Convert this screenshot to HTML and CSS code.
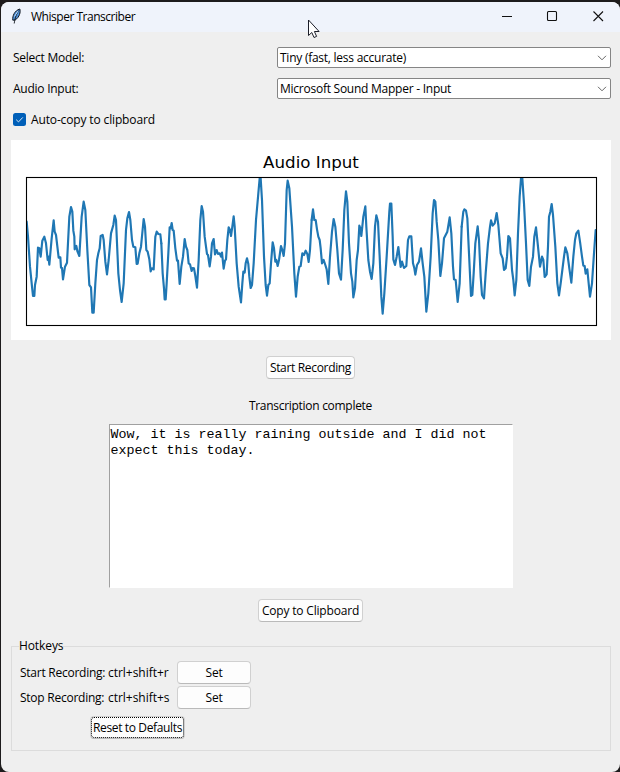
FILE: index.html
```html
<!DOCTYPE html>
<html lang="en">
<head>
<meta charset="utf-8">
<title>Whisper Transcriber</title>
<link rel="stylesheet" href="styles.css">
</head>
<body>
<main class="window">
  <header class="titlebar">
    <svg class="feather" width="12" height="17" viewBox="0 0 12 17">
      <path d="M1.8 12.200C1.200 8 3.600 2.600 8.800 1c1 3-.2 8-4.600 11z" fill="#4f91d8" stroke="#10151d" stroke-width="1"/>
      <path d="M8 2.500C5.800 5 4.200 9 3.200 15.500" fill="none" stroke="#10151d" stroke-width=".9"/>
      <path d="M7 3 3.500 8.500" stroke="#b9dcff" stroke-width="1"/>
    </svg>
    <h1 class="title">Whisper Transcriber</h1>
    <div class="controls">
      <svg width="46" height="30" viewBox="0 0 46 30"><path d="M18 14.500h10" stroke="#111"/></svg>
      <svg width="46" height="30" viewBox="0 0 46 30"><rect x="17.500" y="9.500" width="9" height="9" rx="1" fill="none" stroke="#111" stroke-width="1.100"/></svg>
      <svg width="46" height="30" viewBox="0 0 46 30"><path d="m17.500 9.500 9.500 9.500m0-9.500-9.500 9.500" stroke="#111" stroke-width="1.100"/></svg>
    </div>
  </header>
  <svg class="cursor" width="14" height="20" viewBox="0 0 14 20"><path d="M1.500 1v15.500l3.300-3 2.200 5 2.600-1.100-2.200-4.900h4.700z" fill="#fff" stroke="#1b1d28"/></svg>

  <section class="settings">
    <div class="row"><span>Select Model:</span>
      <div class="combo"><span>Tiny (fast, less accurate)</span><svg width="10" height="6" viewBox="0 0 10 6"><path d="m1 .8 4 4 4-4" fill="none" stroke="#666"/></svg></div></div>
    <div class="row"><span>Audio Input:</span>
      <div class="combo"><span>Microsoft Sound Mapper - Input</span><svg width="10" height="6" viewBox="0 0 10 6"><path d="m1 .8 4 4 4-4" fill="none" stroke="#666"/></svg></div></div>
    <div class="check"><svg width="13" height="13" viewBox="0 0 13 13"><rect width="13" height="13" rx="2.500" fill="#005fb8"/><path d="m3.200 6.700 2.300 2.200 4.300-4.500" fill="none" stroke="#d8e8f6"/></svg><span>Auto-copy to clipboard</span></div>
  </section>

  <section class="chart">
    <h2 class="chart-title">Audio Input</h2>
    <svg class="plot" width="600" height="165" viewBox="0 105 1800 495">
      <defs><clipPath id="axes"><rect x="46" y="112" width="1711" height="444"/></clipPath></defs>
      <g clip-path="url(#axes)" class="wave">
        <polyline transform="translate(-3 0)" points="50,245 54,290 60,380 66,440 69,468 73,468 75,435 80,410 84,323 88,325 92,350 97,302 103,290 108,310 113,360 115,350 118,374 125,295 131,241 134,275 138,285 146,353 151,352 153,383 156,384 159,418 165,380 171,368 178,230 183,201 187,215 190,272 193,290 194,328 199,318 202,333 208,348 215,230 221,185 226,210 232,330 238,435 243,442 247,518 251,518 256,430 261,360 265,340 269,325 272,288 278,285 281,300 286,365 291,403 296,360 303,280 310,255 314,227 318,240 325,400 330,450 335,486 341,430 348,270 352,235 357,216 361,240 366,300 370,320 376,322 380,372 383,371 388,340 393,320 401,237 405,260 409,330 413,335 418,358 422,394 426,385 431,388 436,290 440,275 445,282 451,283 454,310"/>
        <polyline transform="translate(447 0)" points="4,310 8,400 12,445 14,478 17,478 20,430 25,340 29,262 32,265 35,249 38,270 41,272 46,325 51,362 54,362 59,432 64,380 69,350 74,297 78,320 82,330 86,370 90,373 95,393 98,384 102,385 106,408 111,443 116,360 121,240 125,198 129,215 134,290 138,320 141,342 144,345 149,379 153,350 156,310 161,297 165,343 170,330 174,342 179,340 183,350 186,338 191,386 195,362 198,358 202,300 206,262 210,270 213,288 217,260 221,229 224,260 230,370 236,440 243,487 247,430 250,395 254,398 257,370 261,355 265,372 268,410 272,444 276,435 281,370 288,240 295,160 299,115 302,115 306,180 312,350 317,435 321,467 325,435 329,430 333,370 338,307 342,325 346,365 349,360 353,378 357,360 363,318 367,330 371,348 375,310 380,150 383,122 388,145 396,260 403,400 408,470 413,410 418,380 422,378 427,340 432,345 437,332 442,342 446,366 450,330 455,240"/>
        <polyline transform="translate(897 0)" points="5,240 9,208 13,240 17,240 21,268 25,290 29,300 32,325 36,370 41,360 46,375 50,388 55,432 60,350 66,275 71,237 76,260 82,330 87,400 93,419 98,330 103,210 108,154 112,185 117,310 123,400 127,425 130,472 135,445 140,360 144,330 148,257 151,265 154,288 160,230 166,199 169,260 175,360 180,395 185,417 190,370 195,260 199,226 204,245 209,350 214,470 218,521 223,460 230,350 238,215 240,191 244,191 248,290 250,358 255,375 260,350 265,321 269,355 272,381 276,365 282,384 289,378 294,300 298,289 304,289 309,370 313,385 316,404 321,375 327,365 333,325 338,370 343,410 349,515 355,460 362,350 368,220 372,180 376,185 380,245 385,300 391,408 396,370 402,295 407,285 412,275 419,232 424,280 429,380 432,418 437,420 443,486 449,430 455,260"/>
        <polyline transform="translate(1347 0)" points="5,260 10,215 13,208 18,212 22,235 27,340 33,468 37,465 41,400 46,310 53,259 57,300 62,410 66,465 72,475 77,400 84,310 90,260 93,241 98,257 104,250 110,219 115,255 122,340 128,355 132,390 137,385 141,350 145,288 150,295 156,390 160,420 164,466 169,420 174,280 179,170 183,115 187,115 192,190 198,310 203,420 208,438 213,380 219,350 223,290 228,262 233,310 240,380 246,350 250,360 254,411 260,403 264,320 267,230 271,215 275,192 279,225 286,320 292,430 297,466 302,430 307,390 312,350 316,322 322,340 328,385 334,428 340,350 345,300 349,280 355,272 360,305 366,350 370,377 374,378 377,401 382,388 385,420 390,470 396,430 402,340 407,270"/>
      </g>
      <rect x="46.500" y="112.500" width="1710" height="444" fill="none" stroke="#000" stroke-width="3.300"/>
    </svg>
  </section>

  <section class="transcript">
    <button class="btn start">Start Recording</button>
    <p class="status">Transcription complete</p>
    <div class="output">Wow, it is really raining outside and I did not<br>expect this today.</div>
    <button class="btn copy">Copy to Clipboard</button>
  </section>

  <fieldset class="hotkeys">
    <legend>Hotkeys</legend>
    <div class="keys">
      <span>Start Recording:</span><span class="combination">ctrl+shift+r</span><button class="btn">Set</button>
      <span>Stop Recording:</span><span class="combination">ctrl+shift+s</span><button class="btn">Set</button>
    </div>
    <button class="btn reset">Reset to Defaults</button>
  </fieldset>
</main>
</body>
</html>
```
FILE: styles.css
```css
* { box-sizing: border-box; }
body {
  margin: 0;
  height: 772px;
  overflow: hidden;
  background: #1d1b1c;
  padding: 2px 0 0 1px;
  font: 12px/17px "Open Sans", "Noto Sans", sans-serif;
  letter-spacing: -.25px;
  color: #000;
}
span, button { white-space: nowrap; }
.window {
  position: relative;
  height: 770px;
  background: #efefef;
  border-radius: 8px;
  overflow: hidden;
}
.titlebar {
  display: flex;
  height: 30px;
  background: #eff3fb;
}
.feather { margin: 6px 0 0 10px; }
.title {
  margin: 7px 0 0 8px;
  font-size: 12px;
  line-height: 16px;
  font-weight: 400;
  letter-spacing: -.48px;
}
.controls { display: flex; margin: 0 -2px 0 auto; }
.cursor { position: absolute; left: 306px; top: 17px; }
.settings { height: 108px; padding: 15px 9px 0 12px; }
.row {
  display: flex;
  justify-content: space-between;
  align-items: center;
  height: 21px;
  margin-bottom: 10px;
}
.combo {
  display: flex;
  align-items: center;
  justify-content: space-between;
  width: 334px;
  height: 21px;
  padding: 0 3px 0 2px;
  border: 1px solid #858585;
  border-radius: 2px;
  background: #fff;
}
.check {
  display: flex;
  align-items: center;
  gap: 5px;
  height: 21px;
  letter-spacing: -.14px;
}
.chart {
  width: 600px;
  height: 200px;
  margin-left: 10px;
  background: #fff;
}
.chart-title {
  height: 35px;
  margin: 0;
  padding-top: 12px;
  text-align: center;
  font: 16.670px/22px "DejaVu Sans", sans-serif;
  letter-spacing: 0;
}
.plot { display: block; }
.wave polyline {
  fill: none;
  stroke: #1f77b4;
  stroke-width: 6.500;
  stroke-linejoin: round;
  stroke-linecap: round;
}
.transcript {
  display: flex;
  flex-direction: column;
  align-items: center;
  padding-top: 16px;
}
.btn {
  display: flex;
  align-items: center;
  justify-content: center;
  height: 23px;
  padding: 0;
  border: 1px solid #d0d0d0;
  border-bottom-color: #bababa;
  border-radius: 4px;
  background: #fdfdfd;
  font: inherit;
  letter-spacing: inherit;
  color: inherit;
}
.start { width: 89px; letter-spacing: -.33px; }
.status { margin: 18px 0 10px; letter-spacing: -.29px; }
.output {
  width: 404px;
  height: 164px;
  padding: 2px 1px;
  border: 1px solid #fff;
  border-top-color: #a0a0a0;
  border-left-color: #a0a0a0;
  background: #fff;
  font: 13.330px/16px "Liberation Mono", monospace;
  letter-spacing: 0;
  white-space: nowrap;
}
.copy { width: 105px; margin-top: 11px; letter-spacing: -.18px; }
.hotkeys {
  width: 600px;
  height: 113px;
  margin: 16px 0 0 10px;
  padding: 7px 0 0 8px;
  border: 1px solid #dcdcdc;
}
.hotkeys legend {
  height: 16px;
  margin-left: -1px;
  padding: 0;
  line-height: 16px;
  letter-spacing: -.1px;
}
.keys {
  display: grid;
  grid-template-columns: 88px 69px 74px;
  align-items: center;
  row-gap: 2px;
}
.combination { letter-spacing: -.03px; }
.reset {
  width: 95px;
  margin: 7px 0 0 70px;
  letter-spacing: -.36px;
  outline: 1px dotted #000;
  outline-offset: -2px;
}
```
